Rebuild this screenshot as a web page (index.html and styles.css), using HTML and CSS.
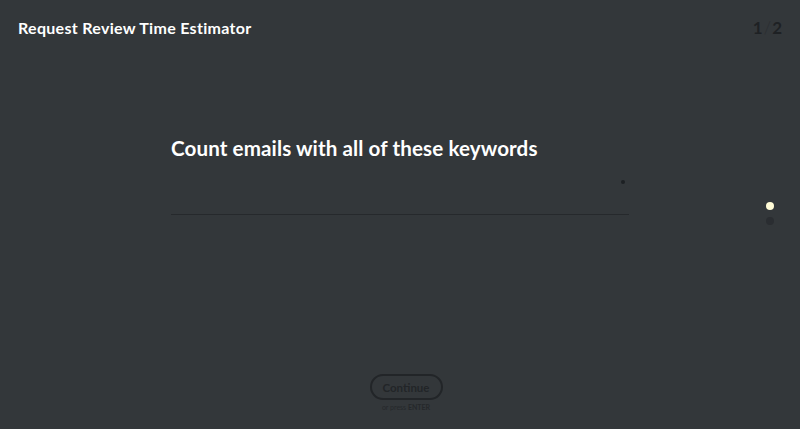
FILE: index.html
```html
<!DOCTYPE html>
<html>
<head>
<meta charset="utf-8">
<link rel="stylesheet" href="styles.css">
</head>
<body>
<div class="page">
  <header class="topbar">
    <h1 class="app-title">Request Review Time Estimator</h1>
    <div class="progress"><span>1</span><span class="slash">/</span><span>2</span></div>
  </header>
  <main class="main">
    <section class="question">
      <h2 class="q-title">Count emails with all of these keywords</h2>
      <div class="field">
        <span class="field-dot"></span>
      </div>
    </section>
    <nav class="steps">
      <span class="step active"></span>
      <span class="step"></span>
    </nav>
  </main>
  <footer class="actions">
    <button class="continue">Continue</button>
    <div class="hint">or press <b>ENTER</b></div>
  </footer>
</div>
</body>
</html>
```

FILE: styles.css
```css
html, body {
  margin: 0;
  padding: 0;
  background: #33373a;
  font-family: "Lato", "Open Sans", sans-serif;
}
.page {
  width: 800px;
  height: 429px;
  display: flex;
  flex-direction: column;
  overflow: hidden;
}
.topbar {
  display: flex;
  justify-content: space-between;
  align-items: center;
  padding: 16px 18px 0 18px;
  height: 22px;
}
.app-title {
  margin: 0;
  font-size: 16px;
  font-weight: 700;
  color: #ffffff;
  letter-spacing: 0.3px;
}
.progress {
  font-size: 17px;
  font-weight: 700;
  color: #1e2124;
  display: flex;
  gap: 1px;
}
.progress .slash {
  color: #2a2d31;
  font-weight: 300;
}
.main {
  position: relative;
  flex: 1;
  display: flex;
  justify-content: center;
}
.question {
  width: 458px;
  padding-top: 98px;
}
.q-title {
  margin: 0;
  font-size: 20.6px;
  font-weight: 700;
  color: #ffffff;
  letter-spacing: 0.1px;
}
.field {
  position: relative;
  height: 46px;
  margin-top: 8px;
  border-bottom: 1px solid #26292c;
}
.field-dot {
  position: absolute;
  right: 4px;
  top: 12px;
  width: 4px;
  height: 4px;
  border-radius: 50%;
  background: #1d2023;
}
.steps {
  position: absolute;
  right: 26px;
  top: 164px;
  display: flex;
  flex-direction: column;
  gap: 7px;
  align-items: center;
}
.step {
  width: 8px;
  height: 8px;
  border-radius: 50%;
  background: #2a2d31;
}
.step.active {
  background: #fffbd6;
}
.actions {
  display: flex;
  flex-direction: column;
  align-items: center;
  padding-bottom: 18px;
  padding-left: 12px;
}
.continue {
  width: 73px;
  height: 26px;
  border: 2px solid #222528;
  border-radius: 13px;
  background: transparent;
  color: #222528;
  font-family: "Lato", "Open Sans", sans-serif;
  font-weight: 700;
  font-size: 11.5px;
  padding: 0;
}
.hint {
  margin-top: 3px;
  font-size: 7px;
  color: #25282b;
}
.hint b {
  font-weight: 700;
}
```
